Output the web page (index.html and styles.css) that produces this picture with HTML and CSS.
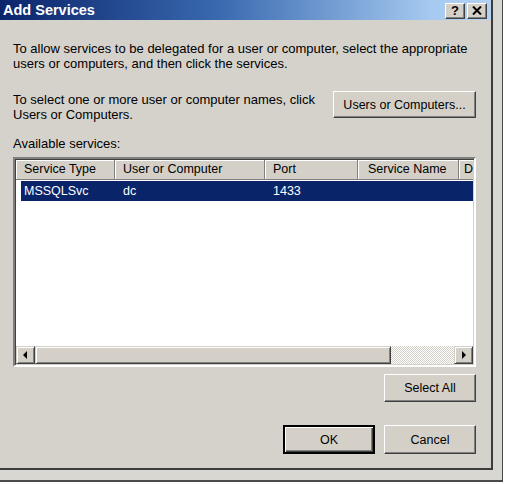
FILE: index.html
```html
<!DOCTYPE html>
<html>
<head>
<meta charset="utf-8">
<link rel="stylesheet" href="styles.css">
</head>
<body>
<div class="backdrop">
  <div class="window">
    <div class="titlebar">
      <span class="title">Add Services</span>
      <div class="tbtns">
        <span class="tbtn help">?</span>
        <span class="tbtn close"><svg width="10" height="9" viewBox="0 0 10 9"><path d="M1 0.5 L9 8.5 M9 0.5 L1 8.5" stroke="#000" stroke-width="2"/></svg></span>
      </div>
    </div>
    <div class="content">
      <p class="intro">To allow services to be delegated for a user or computer, select the appropriate<br>users or computers, and then click the services.</p>
      <div class="select-row">
        <p class="select-text">To select one or more user or computer names, click<br>Users or Computers.</p>
        <button class="btn btn-users">Users or Computers...</button>
      </div>
      <div class="label">Available services:</div>
      <div class="list">
        <div class="header">
          <div class="hcol c1">Service Type</div>
          <div class="hcol c2">User or Computer</div>
          <div class="hcol c3">Port</div>
          <div class="hcol c4">Service Name</div>
          <div class="hcol c5">D</div>
        </div>
        <div class="rows">
          <div class="row selected">
            <div class="cell c1">MSSQLSvc</div>
            <div class="cell c2">dc</div>
            <div class="cell c3">1433</div>
            <div class="cell c4"></div>
          </div>
        </div>
        <div class="hscroll">
          <div class="sbtn"><svg width="5" height="8" viewBox="0 0 5 8"><path d="M4 0 L0 4 L4 8 Z" fill="#000"/></svg></div>
          <div class="thumb"></div>
          <div class="track"></div>
          <div class="sbtn"><svg width="5" height="8" viewBox="0 0 5 8"><path d="M1 0 L5 4 L1 8 Z" fill="#000"/></svg></div>
        </div>
      </div>
      <div class="actions-top">
        <button class="btn btn-wide">Select All</button>
      </div>
      <div class="actions">
        <button class="btn btn-wide btn-default">OK</button>
        <button class="btn btn-wide">Cancel</button>
      </div>
    </div>
  </div>
</div>
</body>
</html>
```

FILE: styles.css
```css
html, body {
  margin: 0;
  padding: 0;
  background: #ffffff;
}
body {
  width: 506px;
  height: 484px;
  overflow: hidden;
  font-family: "Liberation Sans", Arial, sans-serif;
  font-size: 12.5px;
  color: #000;
}
.backdrop {
  width: 502px;
  height: 480px;
  background: #d9d7d2;
  border-right: 1px solid #4a4a4a;
  border-bottom: 2px solid #4a4a4a;
}
.window {
  width: 491px;
  height: 468px;
  background: #d5d2cc;
  border-right: 2px solid #3c3c3c;
  border-bottom: 2px solid #3c3c3c;
  display: flex;
  flex-direction: column;
}
.titlebar {
  height: 20px;
  background: linear-gradient(to right, #0a246a 0%, #3a6ab0 45%, #a6caf0 88%, #b4d2f2 100%);
  display: flex;
  align-items: center;
  justify-content: space-between;
  padding: 0 4px 0 3px;
}
.title {
  color: #fff;
  font-weight: bold;
  font-size: 14.5px;
  line-height: 20px;
}
.tbtns {
  display: flex;
  gap: 2px;
  padding-top: 1px;
}
.tbtn {
  width: 18px;
  height: 14px;
  background: #d4d0c8;
  border: 1px solid;
  border-color: #fff #404040 #404040 #fff;
  box-shadow: inset -1px -1px #808080;
  display: flex;
  align-items: center;
  justify-content: center;
  font-weight: bold;
  font-size: 13px;
  line-height: 14px;
}
.content {
  padding: 0 15px 0 13px;
  display: flex;
  flex-direction: column;
}
p {
  margin: 0;
}
.intro {
  margin-top: 21px;
  line-height: 15px;
  font-size: 13px;
}
.select-row {
  margin-top: 20px;
  display: flex;
  justify-content: space-between;
  align-items: flex-start;
  line-height: 15px;
}
.select-text {
  font-size: 13px;
  padding-top: 1px;
}
.btn {
  font-family: "Liberation Sans", Arial, sans-serif;
  font-size: 12.5px;
  color: #000;
  background: #d4d0c8;
  border: 1px solid;
  border-color: #fff #404040 #404040 #fff;
  box-shadow: inset -1px -1px #808080;
  padding: 0;
  margin: 0;
}
.btn-users {
  width: 143px;
  height: 27px;
}
.label {
  margin-top: 14px;
  line-height: 15px;
  font-size: 13px;
}
.list {
  margin-top: 6px;
  height: 204px;
  border: 2px solid;
  border-color: #808080 #ffffff #ffffff #808080;
  box-shadow: inset 1px 1px #404040, inset -1px -1px #d4d0c8;
  background: #fff;
  display: flex;
  flex-direction: column;
  padding: 1px;
  box-sizing: content-box;
}
.header {
  height: 20px;
  display: flex;
  background: #d4d0c8;
  flex: none;
}
.hcol {
  box-sizing: border-box;
  height: 20px;
  line-height: 19px;
  padding-left: 8px;
  border-right: 1px solid #808080;
  box-shadow: inset 1px 1px #fff, inset -1px -1px #d4d0c8;
  border-bottom: 1px solid #808080;
  white-space: nowrap;
  overflow: hidden;
}
.c1 { width: 99px; }
.c2 { width: 150px; }
.c3 { width: 93px; }
.c4 { width: 101px; padding-left: 10px; }
.c5 { flex: 1; border-right: none; padding-left: 5px; }
.rows {
  flex: 1;
  padding-top: 1px;
}
.row {
  height: 20px;
  display: flex;
  margin-left: 5px;
  line-height: 20px;
}
.row .cell {
  box-sizing: border-box;
  padding-left: 8px;
  white-space: nowrap;
}
.row .c1 { width: 94px; padding-left: 3px; }
.row .c4 { flex: 1; }
.selected {
  background: #0a246a;
  color: #fff;
}
.hscroll {
  height: 18px;
  display: flex;
  flex: none;
}
.sbtn {
  width: 17px;
  height: 16px;
  background: #d4d0c8;
  border: 1px solid;
  border-color: #d4d0c8 #404040 #404040 #d4d0c8;
  box-shadow: inset 1px 1px #fff, inset -1px -1px #808080;
  display: flex;
  align-items: center;
  justify-content: center;
}
.thumb {
  width: 354px;
  height: 16px;
  background: #d4d0c8;
  border: 1px solid;
  border-color: #d4d0c8 #404040 #404040 #d4d0c8;
  box-shadow: inset 1px 1px #fff, inset -1px -1px #808080;
}
.track {
  flex: 1;
  background: repeating-conic-gradient(#d4d0c8 0 25%, #ffffff 0 50%) 0 0 / 2px 2px;
}
.actions-top {
  margin-top: 7px;
  display: flex;
  justify-content: flex-end;
}
.btn-wide {
  width: 92px;
  height: 28px;
}
.actions {
  margin-top: 23px;
  display: flex;
  justify-content: flex-end;
  gap: 9px;
}
.actions .btn-wide {
  height: 29px;
}
.btn-default {
  border: 2px solid #000;
  box-shadow: inset 1px 1px #fff, inset -1px -1px #404040, inset -2px -2px #808080;
}
```
